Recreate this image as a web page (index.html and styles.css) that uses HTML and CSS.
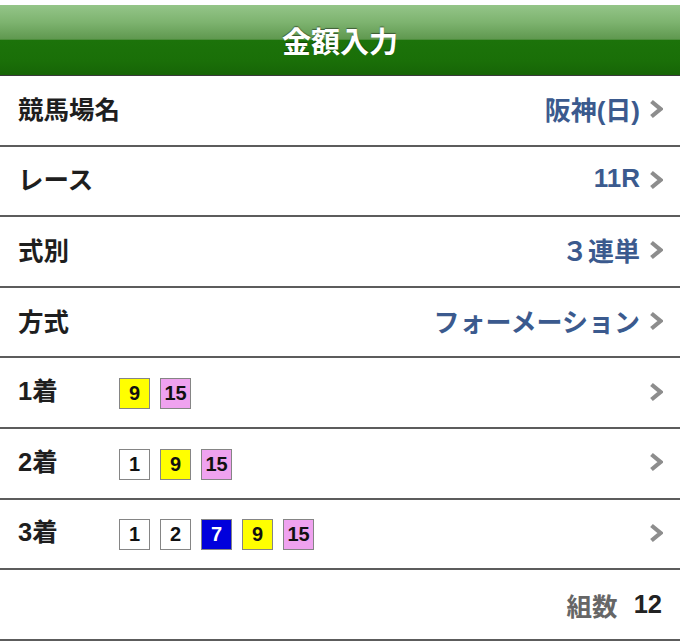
FILE: index.html
```html
<!DOCTYPE html>
<html lang="ja">
<head>
<meta charset="utf-8">
<link rel="stylesheet" href="styles.css">
</head>
<body>
<div class="screen">
  <header class="header"><h1 class="title">金額入力</h1></header>
  <ul class="list">
    <li class="row">
      <span class="label">競馬場名</span>
      <span class="value">阪神(日)</span>
      <svg class="chev" viewBox="0 0 14 20"><polyline points="2.5,2.5 11.5,10 2.5,17.5"/></svg>
    </li>
    <li class="row">
      <span class="label">レース</span>
      <span class="value">11R</span>
      <svg class="chev" viewBox="0 0 14 20"><polyline points="2.5,2.5 11.5,10 2.5,17.5"/></svg>
    </li>
    <li class="row">
      <span class="label">式別</span>
      <span class="value">３連単</span>
      <svg class="chev" viewBox="0 0 14 20"><polyline points="2.5,2.5 11.5,10 2.5,17.5"/></svg>
    </li>
    <li class="row">
      <span class="label">方式</span>
      <span class="value">フォーメーション</span>
      <svg class="chev" viewBox="0 0 14 20"><polyline points="2.5,2.5 11.5,10 2.5,17.5"/></svg>
    </li>
    <li class="row">
      <span class="label label-fixed">1着</span>
      <span class="badges"><span class="badge b-yellow">9</span><span class="badge b-pink">15</span></span>
      <svg class="chev" viewBox="0 0 14 20"><polyline points="2.5,2.5 11.5,10 2.5,17.5"/></svg>
    </li>
    <li class="row">
      <span class="label label-fixed">2着</span>
      <span class="badges"><span class="badge b-white">1</span><span class="badge b-yellow">9</span><span class="badge b-pink">15</span></span>
      <svg class="chev" viewBox="0 0 14 20"><polyline points="2.5,2.5 11.5,10 2.5,17.5"/></svg>
    </li>
    <li class="row">
      <span class="label label-fixed">3着</span>
      <span class="badges"><span class="badge b-white">1</span><span class="badge b-white">2</span><span class="badge b-blue">7</span><span class="badge b-yellow">9</span><span class="badge b-pink">15</span></span>
      <svg class="chev" viewBox="0 0 14 20"><polyline points="2.5,2.5 11.5,10 2.5,17.5"/></svg>
    </li>
    <li class="row row-total">
      <span class="total-label">組数</span>
      <span class="total-num">12</span>
    </li>
  </ul>
</div>
</body>
</html>
```

FILE: styles.css
```css
html, body {
  margin: 0;
  padding: 0;
  background: #fff;
}
body {
  font-family: "Liberation Sans", "Noto Sans CJK JP", sans-serif;
  width: 680px;
  height: 641px;
  overflow: hidden;
}
.screen {
  padding-top: 5px;
}
.header {
  height: 70px;
  background: linear-gradient(to bottom, #94c588 0%, #7db36f 25%, #5f984f 49%, #1c730a 50%, #1a6f08 80%, #176507 100%);
  border-bottom: 1.5px solid #3a3a3a;
  display: flex;
  align-items: center;
  justify-content: center;
}
.title {
  margin: 0;
  color: #fff;
  font-size: 29px;
  font-weight: bold;
  text-shadow: 0 -1px 1px rgba(0,0,0,0.45);
}
.list {
  list-style: none;
  margin: 0;
  padding: 0;
}
.row {
  height: 68.6px;
  border-bottom: 2px solid #5c5c5c;
  display: flex;
  align-items: center;
  padding: 0 17px 0 18px;
  box-sizing: content-box;
}
.label {
  font-size: 25.5px;
  font-weight: bold;
  color: #1e1e1e;
  flex: 1;
  margin-top: -6px;
}
.label-fixed {
  flex: 0 0 101px;
  margin-top: -8px;
}
.value {
  font-size: 26px;
  font-weight: bold;
  color: #3b5a8e;
  margin-top: -4px;
}
.chev {
  width: 14px;
  height: 20px;
  margin-left: 9px;
  margin-top: -2px;
  fill: none;
  stroke: #8d8d8d;
  stroke-width: 4.2;
}
.badges {
  flex: 1;
  display: flex;
  gap: 10px;
  margin-top: 2px;
}
.badge {
  width: 29px;
  height: 29px;
  border: 1.5px solid #858585;
  display: flex;
  align-items: center;
  justify-content: center;
  font-size: 20px;
  font-weight: bold;
  color: #111;
  box-sizing: content-box;
}
.b-white { background: #fff; }
.b-yellow { background: #ffff00; }
.b-pink { background: #efa2ef; }
.b-blue { background: #0000dc; color: #fff; }
.row-total {
  justify-content: flex-end;
  gap: 16px;
  padding-right: 18px;
}
.total-label {
  font-size: 25.5px;
  font-weight: bold;
  color: #666;
}
.total-num {
  font-size: 25.5px;
  font-weight: bold;
  color: #222;
}
```
